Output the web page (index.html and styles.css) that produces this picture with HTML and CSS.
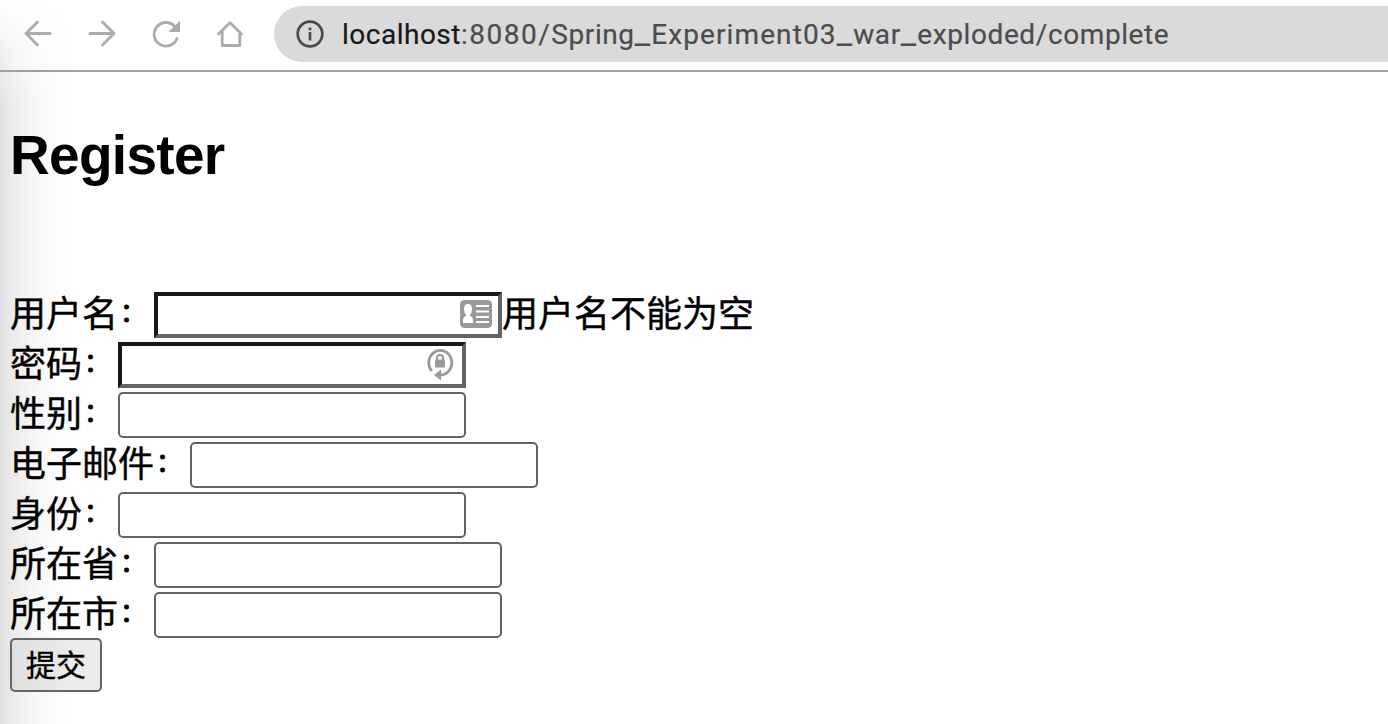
FILE: index.html
```
<!DOCTYPE html>
<html lang="zh-CN">
<head>
<meta charset="utf-8">
<title>Register</title>
<link rel="stylesheet" href="styles.css">
</head>
<body>
<header class="toolbar">
  <nav class="nav">
    <svg class="nav-icon" viewBox="0 0 32 32"><path d="M28 15.500H4M15.500 4 4 15.500 15.500 27"/></svg>
    <svg class="nav-icon" viewBox="0 0 32 32"><path d="M4 15.500H28M16.500 4 28 15.500 16.500 27"/></svg>
    <svg class="nav-icon" viewBox="0 0 32 32"><path d="M27 20.500A11.800 11.800 0 1 1 24.800 8.500"/><path class="solid" d="M30 2.500V14H18.500Z"/></svg>
    <svg class="nav-icon" viewBox="0 0 32 32"><path d="M4.500 16 16 4.800 27.500 16M8.200 14V27.500H25.800V14"/></svg>
  </nav>
  <div class="address">
    <svg class="info" viewBox="0 0 28 28"><circle cx="14" cy="14" r="12.300"/><path d="M14 12V20.500M14 7.500V10.300"/></svg>
    <span class="url"><span class="host">localhost</span><span class="wide">:8080/</span>Spring<span class="under">_</span><span class="mid">Experiment03</span><span class="under">_</span>war<span class="under">_</span>exploded/complete</span>
  </div>
</header>
<main class="page">
  <h2 class="title">Register</h2>
  <form class="form">
    <div class="row"><label>用户名<span class="colon">：</span></label><span class="field inset"><svg class="card" viewBox="0 0 32 28"><rect width="32" height="28" rx="4.500"/><path class="white" d="M3 23V20Q3 17 6.500 15.500Q4 13 4 9Q4 4 8 4T12 9Q12 13 9.500 15.500Q13 17 13 20V23Z"/><path class="line" d="M16 6H29M16 11.500H29M16 17H29M16 22H29"/></svg></span><span class="error">用户名不能为空</span></div>
    <div class="row"><label>密码<span class="colon">：</span></label><span class="field inset"><svg class="lock" viewBox="0 0 28 34"><path class="ring" d="M5.800 24A11.500 12.300 0 1 1 15 28"/><path d="M8 28 15 22.500V33.500Z"/><rect x="9" y="12.500" width="10" height="8" rx="1"/><path class="shackle" d="M11 13.500V11a3 3 0 0 1 6 0V13.500"/></svg></span></div>
    <div class="row"><label>性别<span class="colon">：</span></label><span class="field"></span></div>
    <div class="row"><label>电子邮件<span class="colon">：</span></label><span class="field"></span></div>
    <div class="row"><label>身份<span class="colon">：</span></label><span class="field"></span></div>
    <div class="row"><label>所在省<span class="colon">：</span></label><span class="field"></span></div>
    <div class="row"><label>所在市<span class="colon">：</span></label><span class="field"></span></div>
    <button class="submit" type="button">提交</button>
  </form>
</main>
</body>
</html>
```
FILE: styles.css
```
* { box-sizing: border-box; }
body {
  margin: 0;
  height: 724px;
  overflow: hidden;
  color: #000;
  font-family: "Liberation Sans", "Noto Sans CJK SC", sans-serif;
  background:
    linear-gradient(to bottom, #fff 0, rgba(255,255,255,0) 110px),
    linear-gradient(to right, #e0e0e0 0, #ececec 14px, #f7f7f7 36px, #fdfdfd 58px, #fff 72px);
}
.toolbar {
  display: flex;
  height: 72px;
  padding-top: 6px;
  border-bottom: 2px solid #a0a0a0;
}
.nav { display: flex; gap: 32px; width: 274px; padding: 12px 0 0 22px; }
.nav-icon { width: 32px; height: 32px; fill: none; stroke: #acacac; stroke-width: 2.8; stroke-linecap: round; stroke-linejoin: round; }
.nav-icon .solid { fill: #acacac; stroke: none; }
.address {
  display: flex;
  flex: 1;
  align-items: center;
  gap: 18px;
  height: 56px;
  padding-left: 22px;
  border-radius: 28px 0 0 28px;
  background: #dadada;
}
.info { width: 28px; height: 28px; fill: none; stroke: #484b51; stroke-width: 2.7; }
.url { padding-top: 2px; font: 28px/56px Roboto, sans-serif; letter-spacing: .6px; color: #4b4c50; white-space: nowrap; -webkit-text-stroke: .2px; }
.host { color: #17181a; letter-spacing: .5px; }
.wide { letter-spacing: 1.5px; }
.mid { letter-spacing: 1.1px; }
.under { font-size: 34px; line-height: 1; letter-spacing: 1.2px; }
.page { padding: 47px 10px 0; }
.title { margin: 0; height: 170px; font-size: 55px; line-height: 72px; letter-spacing: -.7px; }
.row { display: flex; height: 50px; align-items: flex-start; font: 36px/50px "Noto Sans CJK SC", sans-serif; white-space: nowrap; }
.row > label, .error { margin-top: -3px; -webkit-text-stroke: .4px #000; }
.row > label { display: flex; }
.colon { width: 36px; padding-left: 2px; font-size: 26px; line-height: 50px; -webkit-text-stroke: 1px #000; }
.field { display: flex; justify-content: flex-end; width: 348px; height: 46px; margin-top: 3px; border: 2px solid #646464; border-radius: 5px; background: #fff; }
.inset { border: 4px solid; border-color: #171717 #646464 #646464 #171717; border-radius: 0; }
.card { width: 32px; height: 28px; margin: 4px 6px 0 0; fill: #999; }
.card .white { fill: #fff; }
.card .line { stroke: #fff; stroke-width: 2.2; }
.lock { width: 28px; height: 34px; margin: 1px 8px 0 0; fill: #999; }
.lock .ring { fill: none; stroke: #999; stroke-width: 2.8; }
.lock .shackle { fill: none; stroke: #999; stroke-width: 2; }
.submit {
  display: block;
  width: 92px;
  height: 54px;
  margin-top: -1px;
  padding: 0 0 3px;
  border: 2px solid #646464;
  border-radius: 5px;
  color: #000;
  background: linear-gradient(to right, #dfdfdf, #ebebeb 60px);
  font: 30px/47px "Noto Sans CJK SC", sans-serif;
  -webkit-text-stroke: .4px #000;
}
```
